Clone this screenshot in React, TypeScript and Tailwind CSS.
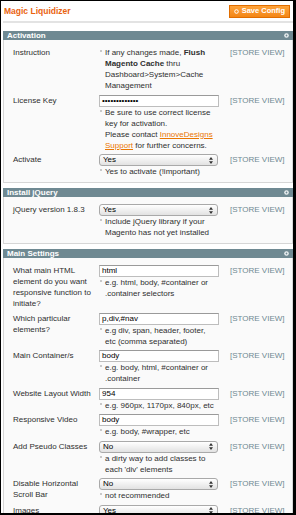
import React from 'react';

type RowProps = {
  label: string[];
  field?: React.ReactNode;
  note?: React.ReactNode[];
};

const Note = ({ lines }: { lines: React.ReactNode[] }) => (
  <div className="flex">
    <div className="w-[6px] shrink-0 pl-[1px] pt-[3px]">
      <div className="h-[2px] w-[2px] rounded-full bg-[#b8b8b8]" />
    </div>
    <div>
      {lines.map((l, i) => (
        <div key={i} className="whitespace-nowrap">
          {l}
        </div>
      ))}
    </div>
  </div>
);

const TextBox = ({ value }: { value: string }) => (
  <div className="h-[12px] w-[120px] border border-[#bdbdbd] border-t-[#9a9a9a] bg-white pl-[2px] text-[8px] leading-[10px] text-black">
    {value}
  </div>
);

const Select = ({ value }: { value: string }) => (
  <div className="flex h-[12px] w-[119px] items-center justify-between rounded-[3px] border border-[#a9a9a9] bg-linear-to-b from-white to-[#e2e2e2] pl-[3px] pr-[4px] text-[8px] leading-[10px] text-black">
    <span>{value}</span>
    <svg width="4" height="7" viewBox="0 0 4 7">
      <path d="M2 0L4 2.7H0Z M2 7L0 4.3H4Z" fill="#333" />
    </svg>
  </div>
);

const Row = ({ label, field, note }: RowProps) => (
  <div className="grid grid-cols-[86px_120px_1fr] text-[8px] leading-[11px] text-[#2f2f2f]">
    <div>
      {label.map((l, i) => (
        <div key={i} className="whitespace-nowrap">
          {l}
        </div>
      ))}
    </div>
    <div>
      {field}
      {note && <Note lines={note} />}
    </div>
    <div className="whitespace-nowrap pl-[11px] text-[#6f8992]">[STORE VIEW]</div>
  </div>
);

const Section = ({ title, children }: { title: string; children: React.ReactNode }) => (
  <div className="mb-[5px]">
    <div className="flex h-[9px] items-center justify-between bg-[#6f8992] pl-[4px] pr-[4px] text-[8px] font-bold leading-[9px] text-white">
      <span>{title}</span>
      <svg width="5" height="5" viewBox="0 0 5 5">
        <circle cx="2.5" cy="2.5" r="2.3" fill="#eef2f3" />
        <circle cx="2.5" cy="2.5" r="0.9" fill="#6f8992" />
      </svg>
    </div>
    <div className="flex flex-col gap-[3.5px] border border-t-0 border-[#d6d6d6] bg-[#fafafa] pb-[5px] pl-[9px] pt-[7px]">
      {children}
    </div>
  </div>
);

const Link = ({ children }: { children: React.ReactNode }) => (
  <span className="text-[#ea7601] underline">{children}</span>
);

export default function App() {
  return (
    <div className="box-border h-[515px] w-[296px] overflow-hidden border-b-2 border-l border-r-[3px] border-t border-black bg-white pl-[2px] font-['Liberation_Sans',Arial,sans-serif]">
      <div className="flex h-[20px] items-center justify-between pl-[1px]">
        <span className="text-[8.5px] font-bold text-[#e9620f]">Magic Liquidizer</span>
        <div className="mr-[3px] flex h-[13px] items-center gap-[3px] border border-[#e06d00] bg-linear-to-b from-[#ffa43a] to-[#f38614] px-[4px] text-[7.5px] font-bold text-white">
          <svg width="5" height="5" viewBox="0 0 5 5">
            <circle cx="2.5" cy="2.5" r="1.8" fill="none" stroke="white" strokeWidth="1" />
          </svg>
          Save Config
        </div>
      </div>
      <div className="mb-[8px] h-[2px] bg-[#e3e3e3]" />

      <Section title="Activation">
        <Row
          label={['Instruction']}
          note={[
            <>
              If any changes made, <b>Flush</b>
            </>,
            <>
              <b>Magento Cache</b> thru
            </>,
            'Dashboard>System>Cache',
            'Management',
          ]}
        />
        <Row
          label={['License Key']}
          field={<TextBox value="•••••••••••••" />}
          note={[
            'Be sure to use correct license',
            'key for activation.',
            <>
              Please contact <Link>InnoveDesigns</Link>
            </>,
            <>
              <Link>Support</Link> for further concerns.
            </>,
          ]}
        />
        <Row label={['Activate']} field={<Select value="Yes" />} note={['Yes to activate (!important)']} />
      </Section>

      <Section title="Install jQuery">
        <Row
          label={['jQuery version 1.8.3']}
          field={<Select value="Yes" />}
          note={['Include jQuery library if your', 'Magento has not yet installed']}
        />
      </Section>

      <Section title="Main Settings">
        <Row
          label={['What main HTML', 'element do you want', 'responsive function to', 'initiate?']}
          field={<TextBox value="html" />}
          note={['e.g. html, body, #container or', '.container selectors']}
        />
        <Row
          label={['Which particular', 'elements?']}
          field={<TextBox value="p,div,#nav" />}
          note={['e.g div, span, header, footer,', 'etc (comma separated)']}
        />
        <Row
          label={['Main Container/s']}
          field={<TextBox value="body" />}
          note={['e.g. body, html, #container or', '.container']}
        />
        <Row
          label={['Website Layout Width']}
          field={<TextBox value="954" />}
          note={['e.g. 960px, 1170px, 840px, etc']}
        />
        <Row label={['Responsive Video']} field={<TextBox value="body" />} note={['e.g. body, #wrapper, etc']} />
        <Row
          label={['Add Pseudo Classes']}
          field={<Select value="No" />}
          note={['a dirty way to add classes to', "each 'div' elements"]}
        />
        <Row label={['Disable Horizontal', 'Scroll Bar']} field={<Select value="No" />} note={['not recommended']} />
        <Row label={['Images']} field={<Select value="Yes" />} />
      </Section>
    </div>
  );
}
